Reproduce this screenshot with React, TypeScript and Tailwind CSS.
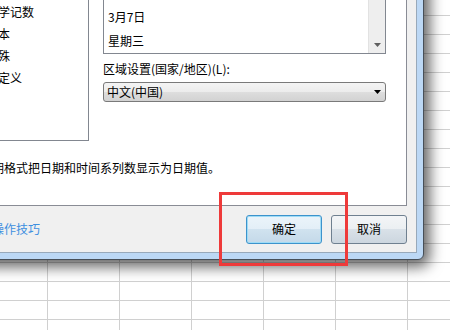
const categories = ['常规', '数值', '货币', '会计专用', '日期', '时间', '百分比', '分数', '科学记数', '文本', '特殊', '自定义'];
const dateTypes = ['*2012/3/7', '*2012年3月7日', '2012-03-07', '2012年3月', '3月7日', '星期三'];

function DownArrow({ color }: { color: string }) {
  return (
    <svg width="7" height="4" viewBox="0 0 7 4">
      <path d="M0 0H7L3.5 4Z" fill={color} />
    </svg>
  );
}

export default function App() {
  return (
    <div className="relative w-[450px] h-[330px] overflow-hidden bg-white bg-[linear-gradient(to_bottom,#d0d0d0_1px,transparent_1px),linear-gradient(to_right,#d0d0d0_1px,transparent_1px)] bg-[length:72px_19px] bg-[position:47px_15px] font-['Noto_Sans_CJK_SC',sans-serif] text-[12px] text-black">
      {/* dialog window */}
      <div className="absolute left-[-40px] top-[-240px] w-[464px] h-[500px] p-[6px] border border-[#474f58] rounded-br-[6px] bg-[#bcd8f5] shadow-[2px_3px_14px_4px_rgba(0,0,0,0.6)]">
        <div className="flex flex-col h-full border border-[#98a9ba] bg-[#f0f0f0]">
          {/* tab page */}
          <div className="mt-[22px] mx-[9px] flex-1 flex flex-col border border-[#898c95] bg-white pl-[4px] pr-[20px] pt-[31px]">
            <div className="flex gap-[14px]">
              <div className="w-[107px] h-[319px] flex-none border border-[#828790] overflow-hidden pt-[2px] pl-[3px]">
                {categories.map((c) => (
                  <div key={c} className="h-[22px] leading-[22px] whitespace-nowrap">
                    {c}
                  </div>
                ))}
              </div>

              <div className="flex-1 flex flex-col">
                <div className="h-[232px] flex border border-[#828790]">
                  <div className="flex-1 flex flex-col justify-end overflow-hidden pl-[4px]">
                    {dateTypes.map((d) => (
                      <div key={d} className="h-[24px] flex-none leading-[24px] whitespace-nowrap">
                        {d}
                      </div>
                    ))}
                  </div>
                  <div className="w-[17px] flex flex-col justify-end bg-[#eeeeee] border-l border-[#e2e2e2]">
                    <div className="h-[17px] flex items-center justify-center">
                      <DownArrow color="#5f5f5f" />
                    </div>
                  </div>
                </div>
                <div className="mt-[7px] leading-[16px] whitespace-nowrap">区域设置(国家/地区)(L):</div>
                <div className="mt-[5px] h-[20px] flex items-center justify-between pl-[3px] pr-[4px] border border-[#7a7a7a] rounded-[3px] bg-[linear-gradient(#f4f4f4_0%,#ececec_50%,#dedede_50%,#d2d2d2_100%)]">
                  <span className="leading-[16px]">中文(中国)</span>
                  <DownArrow color="#000000" />
                </div>
              </div>
            </div>
            <p className="mt-[19px] -ml-[2px] leading-[16px] whitespace-nowrap">日期格式把日期和时间系列数显示为日期值。</p>
          </div>

          {/* footer */}
          <div className="h-[46px] flex items-center pl-[24px] pr-[9px]">
            <a className="text-[#3e8fe0] leading-[16px] whitespace-nowrap">操作技巧</a>
            <div className="ml-auto flex gap-[9px]">
              <button className="w-[76px] h-[29px] rounded-[3px] border border-[#3d93cc] shadow-[inset_0_0_0_1px_#9fdcf6] bg-[linear-gradient(#ebf4fa_0%,#e3eef7_50%,#d0e2ef_50%,#c4d9e9_100%)] text-[12px] text-black">
                确定
              </button>
              <button className="w-[76px] h-[29px] rounded-[3px] border border-[#6f8090] bg-[linear-gradient(#f3f5f7_0%,#ebeff2_50%,#d9e1e8_50%,#ccd6df_100%)] text-[12px] text-black">
                取消
              </button>
            </div>
          </div>
        </div>
      </div>

      {/* red highlight box */}
      <div className="absolute left-[219px] top-[192px] w-[129px] h-[74px] border-[3px] border-[#ee3a3a]" />
    </div>
  );
}
